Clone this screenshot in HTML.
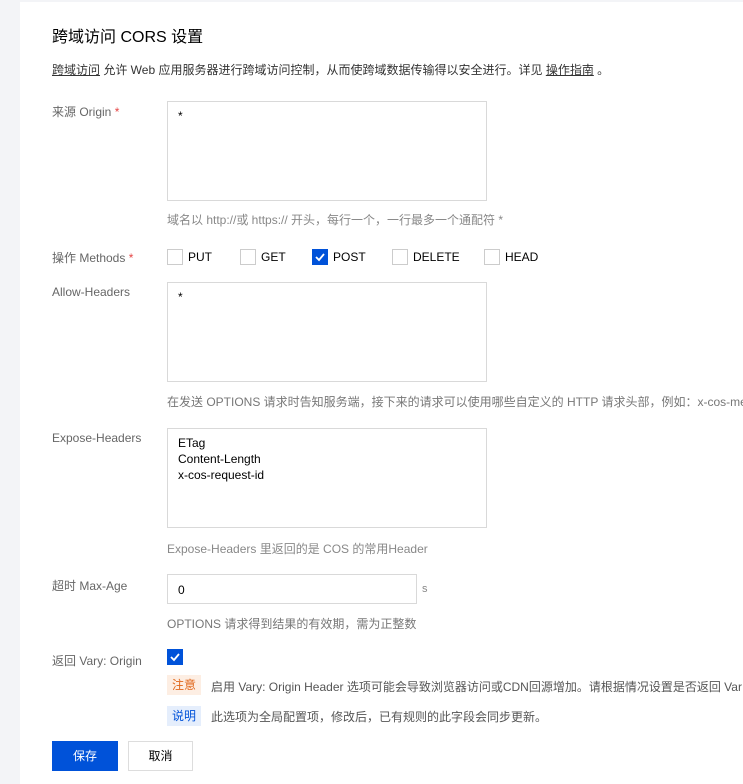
<!DOCTYPE html>
<html><head><meta charset="utf-8"><style>
*{box-sizing:border-box;margin:0;padding:0}
html,body{width:743px;height:784px;overflow:hidden}
body{background:#f3f4f7;font-family:"Liberation Sans","Noto Sans CJK SC",sans-serif;color:#000}
.wrap{position:relative;width:743px;height:784px;overflow:hidden}
.card{position:absolute;left:20px;top:2px;width:723px;height:782px;background:#fff}
.a{position:absolute;white-space:nowrap}
.lbl{font-size:12px;color:#666}
.req{color:#e54545}
.ta{position:absolute;left:167px;width:320px;height:100px;border:1px solid #d9d9d9;font-size:12px;color:#000;padding:6px 10px;line-height:16px}
.hint{font-size:12px;color:#888}
.cb{position:absolute;width:16px;height:16px;border:1px solid #ccc;background:#fff}
.cb.on{background:#0052d9;border-color:#0052d9}
.cbt{font-size:12px;color:#000}
.tag{position:absolute;left:167px;height:20px;line-height:20px;padding:0 5px;font-size:12px}
u{text-decoration:underline}
</style></head><body><div class="wrap">
<div class="card"></div>
<div class="a" style="left:52px;top:23px;font-size:16px;color:#000">跨域访问 CORS 设置</div>
<div class="a" style="left:52px;top:61px;font-size:12px;color:#333"><u>跨域访问</u> 允许 Web 应用服务器进行跨域访问控制，从而使跨域数据传输得以安全进行。详见 <u>操作指南</u> 。</div>

<div class="a lbl" style="left:52px;top:103px">来源 Origin <span class="req">*</span></div>
<div class="ta" style="top:101px">*</div>
<div class="a hint" style="left:167px;top:211px">域名以 http://或 https:// 开头，每行一个，一行最多一个通配符 *</div>

<div class="a lbl" style="left:52px;top:249px">操作 Methods <span class="req">*</span></div>
<div class="cb" style="left:167px;top:249px"></div><div class="a cbt" style="left:188px;top:250px">PUT</div>
<div class="cb" style="left:240px;top:249px"></div><div class="a cbt" style="left:261px;top:250px">GET</div>
<div class="cb on" style="left:312px;top:249px"><svg width="14" height="14" viewBox="0 0 14 14"><path d="M3 7l3 3 5-6" stroke="#fff" stroke-width="1.8" fill="none"/></svg></div><div class="a cbt" style="left:333px;top:250px">POST</div>
<div class="cb" style="left:392px;top:249px"></div><div class="a cbt" style="left:413px;top:250px">DELETE</div>
<div class="cb" style="left:484px;top:249px"></div><div class="a cbt" style="left:505px;top:250px">HEAD</div>

<div class="a lbl" style="left:52px;top:285px">Allow-Headers</div>
<div class="ta" style="top:282px">*</div>
<div class="a hint" style="left:167px;top:393px;color:#777">在发送 OPTIONS 请求时告知服务端，接下来的请求可以使用哪些自定义的 HTTP 请求头部，例如：x-cos-me</div>

<div class="a lbl" style="left:52px;top:431px">Expose-Headers</div>
<div class="ta" style="top:428px">ETag<br>Content-Length<br>x-cos-request-id</div>
<div class="a hint" style="left:167px;top:540px">Expose-Headers 里返回的是 COS 的常用Header</div>

<div class="a lbl" style="left:52px;top:577px">超时 Max-Age</div>
<div class="ta" style="top:574px;width:250px;height:30px;padding:7px 10px">0</div>
<div class="a hint" style="left:422px;top:583px;font-size:11px">s</div>
<div class="a hint" style="left:167px;top:615px;color:#777">OPTIONS 请求得到结果的有效期，需为正整数</div>

<div class="a lbl" style="left:52px;top:652px">返回 Vary: Origin</div>
<div class="cb on" style="left:167px;top:649px"><svg width="14" height="14" viewBox="0 0 14 14"><path d="M3 7l3 3 5-6" stroke="#fff" stroke-width="1.8" fill="none"/></svg></div>
<div class="tag" style="top:675px;background:#fdeee3;color:#e0671b">注意</div>
<div class="a" style="left:211px;top:678px;font-size:12px;color:#555">启用 Vary: Origin Header 选项可能会导致浏览器访问或CDN回源增加。请根据情况设置是否返回 Var</div>
<div class="tag" style="top:706px;background:#e5eefc;color:#0052d9">说明</div>
<div class="a" style="left:211px;top:708px;font-size:12px;color:#555">此选项为全局配置项，修改后，已有规则的此字段会同步更新。</div>

<div class="a" style="left:52px;top:741px;width:66px;height:30px;background:#0052d9;color:#fff;font-size:12px;text-align:center;line-height:30px">保存</div>
<div class="a" style="left:128px;top:741px;width:65px;height:30px;border:1px solid #ddd;background:#fff;color:#000;font-size:12px;text-align:center;line-height:28px">取消</div>
</div></body></html>
